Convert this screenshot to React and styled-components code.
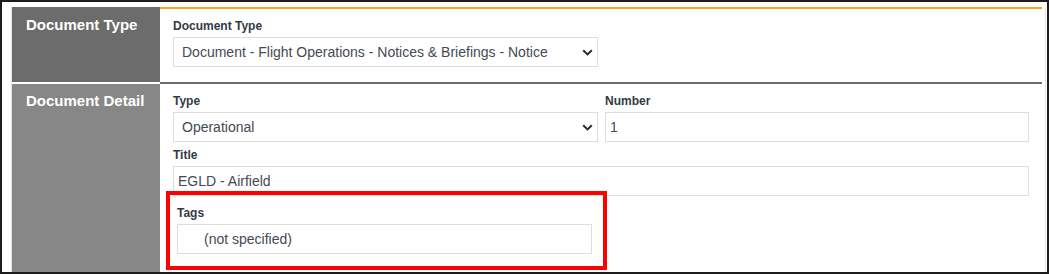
import styled, { createGlobalStyle } from "styled-components";

const GlobalStyle = createGlobalStyle`
  html, body {
    margin: 0;
    padding: 0;
    background: #fff;
  }
  body {
    font-family: "Liberation Sans", Arial, sans-serif;
  }
`;

const Frame = styled.div`
  box-sizing: border-box;
  width: 1049px;
  height: 274px;
  border: 2px solid #1c1c1c;
  background: #fff;
  padding: 5px 1px 0 9px;
  overflow: hidden;
`;

const Panel = styled.div`
  border-left: 1px solid #e4e4e4;
  border-right: 1px solid #e4e4e4;
  padding-right: 3px;
  height: 100%;
  box-sizing: border-box;
`;

const Row = styled.div`
  display: grid;
  grid-template-columns: 148px 1fr;
  flex: ${(p) => (p.$grow ? 1 : "none")};
`;

const SectionLabel = styled.div`
  background: ${(p) => p.$bg};
  color: #fff;
  font-size: 15px;
  font-weight: bold;
  line-height: 18px;
  padding: ${(p) => p.$pt}px 14px 0;
  border-top: ${(p) => (p.$sep ? "2px solid #fff" : "none")};
`;

const SectionBody = styled.div`
  border-top: 2px solid ${(p) => p.$line};
  padding: 10px 13px ${(p) => p.$pb}px;
`;

const Grid = styled.div`
  display: grid;
  grid-template-columns: ${(p) => (p.$cols === 2 ? "425px 1fr" : "1fr")};
  column-gap: 7px;
  row-gap: 6px;
`;

const Field = styled.div`
  display: flex;
  flex-direction: column;
  grid-column: ${(p) => (p.$full ? "1 / -1" : "auto")};
  width: ${(p) => (p.$w ? `${p.$w}px` : "auto")};
`;

const Label = styled.label`
  font-size: 12px;
  font-weight: bold;
  line-height: 14px;
  color: #333a46;
  margin-bottom: 4px;
`;

const Box = styled.div`
  box-sizing: border-box;
  height: 30px;
  border: 1px solid #dedede;
  background: #fff;
  display: flex;
  align-items: center;
  justify-content: space-between;
  padding: 0 4px 0 ${(p) => p.$pl}px;
  font-size: 14px;
  color: #444a55;
  white-space: nowrap;
`;

const Highlight = styled.div`
  grid-column: 1 / -1;
  box-sizing: border-box;
  width: 441px;
  margin: -11px 0 0 -7px;
  border: 4px solid #ff0000;
  padding: 11px 11px 12px 7px;
`;

const Chevron = () => (
  <svg width="11" height="7" viewBox="0 0 11 7" fill="none">
    <path d="M1.2 1.2 5.5 5.4 9.8 1.2" stroke="#2b2b2b" strokeWidth="2" />
  </svg>
);

const Select = ({ value }) => (
  <Box $pl={8}>
    <span>{value}</span>
    <Chevron />
  </Box>
);

export default function App() {
  return (
    <>
      <GlobalStyle />
      <Frame>
        <Panel>
          <Row>
            <SectionLabel $bg="#6c6c6c" $pt={9}>
              Document Type
            </SectionLabel>
            <SectionBody $line="#f5a623" $pb={15}>
              <Field $w={425}>
                <Label>Document Type</Label>
                <Select value="Document - Flight Operations - Notices & Briefings - Notice" />
              </Field>
            </SectionBody>
          </Row>
          <Row>
            <SectionLabel $bg="#878787" $pt={8} $sep>
              Document Detail
            </SectionLabel>
            <SectionBody $line="#6e6e6e" $pb={40}>
              <Grid $cols={2}>
                <Field>
                  <Label>Type</Label>
                  <Select value="Operational" />
                </Field>
                <Field>
                  <Label>Number</Label>
                  <Box $pl={4}>1</Box>
                </Field>
                <Field $full>
                  <Label>Title</Label>
                  <Box $pl={4}>EGLD - Airfield</Box>
                </Field>
                <Highlight>
                  <Field>
                    <Label>Tags</Label>
                    <Box $pl={26}>(not specified)</Box>
                  </Field>
                </Highlight>
              </Grid>
            </SectionBody>
          </Row>
        </Panel>
      </Frame>
    </>
  );
}
